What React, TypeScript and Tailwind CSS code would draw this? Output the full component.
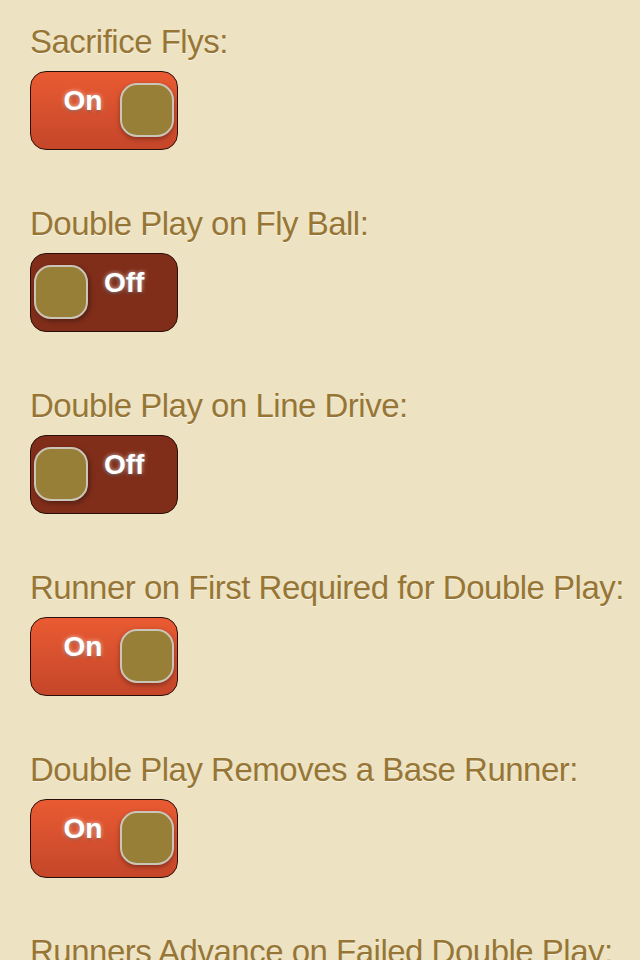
const settings = [
  { label: 'Sacrifice Flys:', on: true },
  { label: 'Double Play on Fly Ball:', on: false },
  { label: 'Double Play on Line Drive:', on: false },
  { label: 'Runner on First Required for Double Play:', on: true },
  { label: 'Double Play Removes a Base Runner:', on: true },
  { label: 'Runners Advance on Failed Double Play:', on: true },
];

function Knob({ className }: { className: string }) {
  return (
    <div
      className={`w-[54px] h-[54px] shrink-0 rounded-[17px] border-[2px] border-[#cbc5b8] bg-[#977f37] ${className}`}
    />
  );
}

function Toggle({ on }: { on: boolean }) {
  return (
    <div
      className={`w-[148px] h-[79px] rounded-[16px] border-[1.5px] border-[#2a0f08] flex items-center overflow-hidden ${
        on ? 'bg-gradient-to-b from-[#e95b32] to-[#c5462a]' : 'bg-[#802e1a]'
      }`}
    >
      {on ? (
        <>
          <span className="w-[104px] text-center -mt-[20px] text-[28px] font-bold text-white [text-shadow:0_0_4px_rgba(255,255,255,0.7),0_2px_3px_rgba(0,0,0,0.35)]">
            On
          </span>
          <Knob className="-ml-[15px] -mt-[2px] shadow-[0_2px_5px_rgba(0,0,0,0.35)]" />
        </>
      ) : (
        <>
          <Knob className="ml-[3px] -mt-[2px] shadow-[2px_2px_5px_rgba(0,0,0,0.35)]" />
          <span className="ml-[16px] -mt-[20px] text-[28px] font-bold text-white [text-shadow:0_0_4px_rgba(255,255,255,0.7),0_2px_3px_rgba(0,0,0,0.45)]">
            Off
          </span>
        </>
      )}
    </div>
  );
}

export default function App() {
  return (
    <div className="w-[640px] h-[960px] overflow-hidden bg-[#ede3c2] pl-[30px] pt-[24px] font-['Liberation_Sans',Arial,sans-serif]">
      <div className="flex flex-col gap-[56px]">
        {settings.map((s) => (
          <div key={s.label} className="flex flex-col gap-[11px]">
            <div className="text-[33px] leading-[36px] tracking-[-0.5px] text-[#977635] whitespace-nowrap [text-shadow:0_1px_0_rgba(255,255,255,0.6)]">
              {s.label}
            </div>
            <Toggle on={s.on} />
          </div>
        ))}
      </div>
    </div>
  );
}
